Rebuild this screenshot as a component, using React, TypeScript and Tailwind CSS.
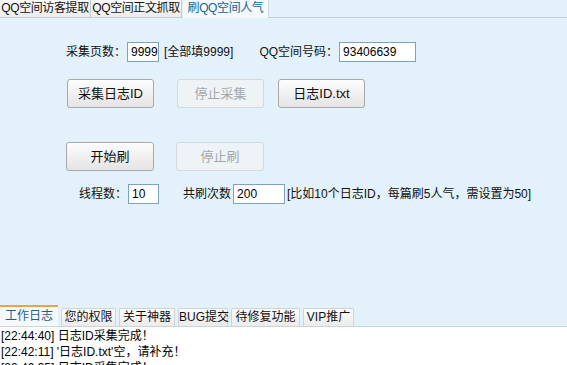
import React from 'react'

const font = { fontFamily: '"Liberation Sans", "Noto Sans CJK SC", sans-serif' }

function Btn({ label, disabled, w = 'w-[87px]' }: { label: string; disabled?: boolean; w?: string }) {
  return disabled ? (
    <button className={`${w} h-[29px] rounded-[3px] border border-[#d3d8dc] bg-[#eef3f6] text-[13px] text-[#a3a7aa]`}>{label}</button>
  ) : (
    <button className={`${w} h-[29px] rounded-[3px] border border-[#a9a9a9] bg-gradient-to-b from-[#fdfdfd] to-[#e4e4e4] text-[13px] text-[#111]`}>{label}</button>
  )
}

function Field({ value, w }: { value: string; w: string }) {
  return (
    <div className={`${w} h-[20px] border border-[#7aa3bd] bg-white text-[12px] leading-[18px] pl-[3px] text-black`}>{value}</div>
  )
}

const topTabs = ['QQ空间访客提取', 'QQ空间正文抓取', '刷QQ空间人气']
const bottomTabs = [
  { label: '工作日志', w: 'w-[58px]' },
  { label: '您的权限', w: 'w-[55px]' },
  { label: '关于神器', w: 'w-[56px]' },
  { label: 'BUG提交', w: 'w-[50px]' },
  { label: '待修复功能', w: 'w-[69px]' },
  { label: 'VIP推广', w: 'w-[51px]' },
]
const logs = [
  '[22:44:40] 日志ID采集完成！',
  "[22:42:11] '日志ID.txt'空，请补充！",
  '[22:40:35] 日志ID采集完成！',
]

export default function App() {
  return (
    <div className="w-[567px] h-[365px] overflow-hidden flex flex-col bg-[#e3f1fa] text-[12px] text-[#111]" style={font}>
      {/* top tabs */}
      <div className="h-[18px] shrink-0 flex border-b border-[#c3ced6]">
        {topTabs.map((t, i) => (
          <div
            key={t}
            className={
              i === 2
                ? 'w-[86px] ml-[1px] h-[18px] bg-[#f3f9fc] text-[#20618f] text-center leading-[16px] border-r border-[#d0d7dc] tracking-[-0.4px] whitespace-nowrap'
                : 'w-[91px] h-[17px] bg-gradient-to-b from-[#fbfbfb] to-[#ececec] border-r border-[#c9c9c9] text-center leading-[16px] text-[#111] overflow-hidden whitespace-nowrap tracking-[-0.4px]'
            }
          >
            {t}
          </div>
        ))}
      </div>

      {/* main panel */}
      <div className="h-[287px] shrink-0 flex flex-col pt-[24px]">
        <div className="flex items-center h-[20px] pl-[66px]">
          <span>采集页数：</span>
          <span className="ml-[1px]"><Field value="9999" w="w-[32px]" /></span>
          <span className="ml-[5px]">[全部填9999]</span>
          <span className="ml-[26px]">QQ空间号码：</span>
          <span className="ml-[1px]"><Field value="93406639" w="w-[77px]" /></span>
        </div>

        <div className="flex mt-[17px] pl-[67px]">
          <Btn label="采集日志ID" />
          <span className="ml-[23px]"><Btn label="停止采集" disabled /></span>
          <span className="ml-[14px]"><Btn label="日志ID.txt" /></span>
        </div>

        <div className="flex mt-[34px] pl-[66px]">
          <Btn label="开始刷" w="w-[88px]" />
          <span className="ml-[22px]"><Btn label="停止刷" disabled w="w-[88px]" /></span>
        </div>

        <div className="flex items-center h-[20px] mt-[13px] pl-[79px]">
          <span>线程数：</span>
          <span className="ml-[1px]"><Field value="10" w="w-[31px]" /></span>
          <span className="ml-[24px]">共刷次数</span>
          <span className="ml-[2px]"><Field value="200" w="w-[52px]" /></span>
          <span className="ml-[2px]">[比如10个日志ID，每篇刷5人气，需设置为50]</span>
        </div>
      </div>

      {/* bottom tabs */}
      <div className="h-[22px] shrink-0 flex items-end gap-[3px] border-b border-[#c9d4dc]">
        {bottomTabs.map((t, i) => (
          <div
            key={t.label}
            className={
              i === 0
                ? `${t.w} h-[21px] bg-[#f4f9fc] border-t-2 border-[#f0a23c] text-[#1f5f8c] text-center leading-[18px] text-[12px]`
                : `${t.w} h-[18px] rounded-t-[2px] border border-b-0 border-[#cfd4d8] bg-gradient-to-b from-[#fbfbfb] to-[#ebebeb] text-center leading-[17px] text-[12px] whitespace-nowrap`
            }
          >
            {t.label}
          </div>
        ))}
      </div>

      {/* log */}
      <div className="flex-1 bg-white pt-[1px] pl-[1px] leading-[16px] text-[12px] text-black">
        {logs.map(l => (
          <div key={l} className="whitespace-pre">{l}</div>
        ))}
      </div>
    </div>
  )
}
